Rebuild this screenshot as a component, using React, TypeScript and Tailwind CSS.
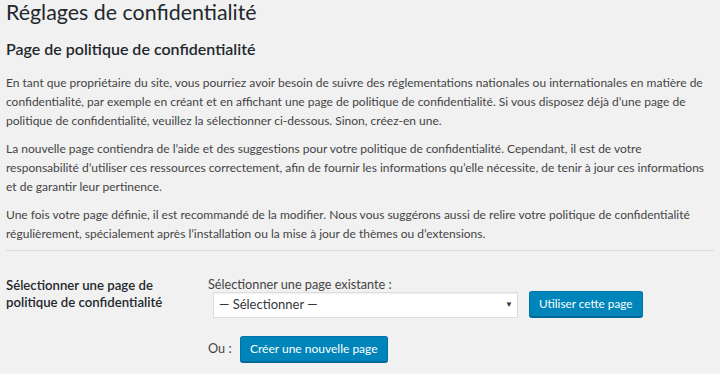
import { ChangeEvent, useState } from 'react';

const pages = ['— Sélectionner —', 'Politique de confidentialité', 'Exemple de page'];

export default function App() {
  const [selected, setSelected] = useState(pages[0]);

  return (
    <div className="min-h-screen bg-[#f1f1f1] font-['Lato',sans-serif] text-[#444]">
      <div className="pl-[6px] pr-[15px]">
        <h1 className="text-[21.4px] leading-[26px] text-[#23282d] font-normal -mt-[1px]">Réglages de confidentialité</h1>

        <h2 className="mt-[14px] text-[16px] leading-[20px] font-semibold text-[#23282d]">
          Page de politique de confidentialité
        </h2>

        <div className="mt-[14px] text-[12px] leading-[19px] space-y-[9px]">
          <p>
            En tant que propriétaire du site, vous pourriez avoir besoin de suivre des réglementations nationales ou
            internationales en matière de confidentialité, par exemple en créant et en affichant une page de politique de
            confidentialité. Si vous disposez déjà d’une page de politique de confidentialité, veuillez la sélectionner
            ci-dessous. Sinon, créez-en une.
          </p>
          <p>
            La nouvelle page contiendra de l’aide et des suggestions pour votre politique de confidentialité. Cependant,
            il est de votre responsabilité d’utiliser ces ressources correctement, afin de fournir les informations
            qu’elle nécessite, de tenir à jour ces informations et de garantir leur pertinence.
          </p>
          <p>
            Une fois votre page définie, il est recommandé de la modifier. Nous vous suggérons aussi de relire votre
            politique de confidentialité régulièrement, spécialement après l’installation ou la mise à jour de thèmes ou
            d’extensions.
          </p>
        </div>

        <hr className="mt-[7px] -mr-[9px] border-t border-[#dcdcdc] border-b-[#fafafa]" />

        <div className="flex mt-[24px]">
          <div className="w-[202px] pt-[2px] text-[13.2px] leading-[17px] font-semibold text-[#23282d]">
            Sélectionner une page de
            <br />
            politique de confidentialité
          </div>

          <div className="flex flex-col">
            <label htmlFor="page-select" className="text-[12.7px] leading-[18px]">
              Sélectionner une page existante :
            </label>
            <div className="flex items-center gap-[11px] mt-[-2px] pl-[5px]">
              <div className="relative">
                <select
                  id="page-select"
                  value={selected}
                  onChange={(e: ChangeEvent<HTMLSelectElement>) => setSelected(e.target.value)}
                  className="appearance-none w-[305px] h-[26px] pl-[5px] pr-[24px] bg-white border border-[#ddd] shadow-[inset_0_1px_2px_rgba(0,0,0,0.07)] text-[13px] text-[#32373c] outline-none"
                >
                  {pages.map((p) => (
                    <option key={p} value={p}>
                      {p}
                    </option>
                  ))}
                </select>
                <span className="pointer-events-none absolute right-[5px] top-[8px] text-[8px] leading-[10px] text-[#32373c]">
                  ▼
                </span>
              </div>
              <button className="h-[26px] px-[9px] rounded-[3px] bg-[#0085ba] border border-[#0073aa] border-b-[#006799] shadow-[0_1px_0_#006799] text-white text-[11.8px] leading-[24px]">
                Utiliser cette page
              </button>
            </div>

            <div className="flex items-center mt-[18px] text-[12.7px]">
              <span className="w-[32px]">Ou :</span>
              <button className="h-[26px] px-[9px] rounded-[3px] bg-[#0085ba] border border-[#0073aa] border-b-[#006799] shadow-[0_1px_0_#006799] text-white text-[12px] leading-[24px]">
                Créer une nouvelle page
              </button>
            </div>
          </div>
        </div>
      </div>
    </div>
  );
}
